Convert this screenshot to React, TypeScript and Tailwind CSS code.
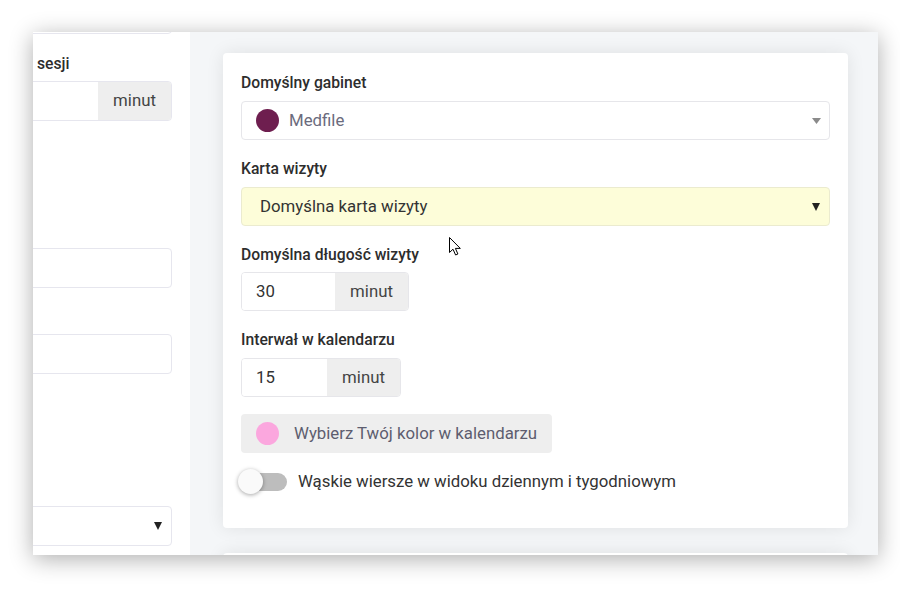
import React from "react";

const Caret = ({ className }: { className?: string }) => (
  <svg width="9" height="6" viewBox="0 0 9 6" className={className}>
    <path d="M0 0 L9 0 L4.5 6 Z" fill="currentColor" />
  </svg>
);

const SolidCaret = ({ className }: { className?: string }) => (
  <svg width="8" height="8" viewBox="0 0 8 8" className={className}>
    <path d="M0 0 L8 0 L4 8 Z" fill="currentColor" />
  </svg>
);

const MinutGroup = ({ value, inputWidth }: { value: string; inputWidth: string }) => (
  <div className="flex h-[39px] w-max rounded-[4px] border border-[#e6e6ea] overflow-hidden">
    <div className={`${inputWidth} flex items-center pl-[14px] text-[16.8px] text-[#333] bg-white`}>
      {value}
    </div>
    <div className="w-[73px] flex items-center justify-center bg-[#eeeeee] text-[16.8px] text-[#444]">
      minut
    </div>
  </div>
);

export default function App() {
  return (
    <div className="relative w-[900px] h-[600px] bg-white pt-[32px] pl-[33px] font-['Roboto',sans-serif]">
      {/* Captured window */}
      <div className="flex w-[845px] h-[523px] overflow-hidden shadow-[0_4px_22px_rgba(0,0,0,0.32)]">
        {/* Left settings column, cut off */}
        <div className="w-[157px] shrink-0 bg-white overflow-hidden pr-[18px] flex flex-col">
          <div className="mt-[-38px] -ml-[30px] h-10 rounded-[4px] border border-[#e6e6ee] bg-white" />
          <div className="mt-[19px] pl-[4px] text-[15.7px] leading-[22px] font-medium text-[#2d2d2d]">
            sesji
          </div>
          <div className="mt-[6px] -ml-[30px] flex h-10 rounded-[4px] border border-[#e6e6ee] overflow-hidden">
            <div className="flex-1 bg-white" />
            <div className="w-[73px] flex items-center justify-center bg-[#eeeeee] text-[16.8px] text-[#444]">
              minut
            </div>
          </div>
          <div className="mt-[127px] -ml-[30px] h-10 rounded-[4px] border border-[#e6e6ee] bg-white" />
          <div className="mt-[46px] -ml-[30px] h-10 rounded-[4px] border border-[#e6e6ee] bg-white" />
          <div className="mt-[132px] -ml-[30px] h-10 rounded-[4px] border border-[#e6e6ee] bg-white flex items-center justify-end pr-[9px]">
            <SolidCaret className="text-[#222]" />
          </div>
        </div>

        {/* Right area */}
        <div className="flex-1 bg-[#f4f6f8] pl-[33px] pr-[30px] pt-[21px]">
          <div className="bg-white rounded-[4px] shadow-[0_0_18px_rgba(0,0,0,0.09)] px-[18px] pt-[20px] pb-[33px]">
            <div className="text-[15.7px] leading-[20px] font-medium text-[#2d2d2d]">Domyślny gabinet</div>
            <div className="mt-2 h-[39px] rounded-[4px] border border-[#e6e6ea] flex items-center pl-[14px] pr-[8px]">
              <span className="w-[23px] h-[23px] rounded-full bg-[#6e1e4f]" />
              <span className="ml-[10px] text-[16.8px] text-[#6b6b7d]">Medfile</span>
              <Caret className="ml-auto text-[#8a8a8a]" />
            </div>

            <div className="mt-[19px] text-[15.7px] leading-[20px] font-medium text-[#2d2d2d]">Karta wizyty</div>
            <div className="mt-2 h-[39px] rounded-[4px] border border-[#ebebcf] bg-[#fdfdd9] flex items-center pl-[18px] pr-[9px]">
              <span className="text-[16.8px] text-[#333]">Domyślna karta wizyty</span>
              <SolidCaret className="ml-auto text-[#222]" />
            </div>

            <div className="mt-[19px] text-[15.7px] leading-[20px] font-medium text-[#2d2d2d]">
              Domyślna długość wizyty
            </div>
            <div className="mt-[7px]">
              <MinutGroup value="30" inputWidth="w-[93px]" />
            </div>

            <div className="mt-[19px] text-[15.7px] leading-[20px] font-medium text-[#2d2d2d]">
              Interwał w kalendarzu
            </div>
            <div className="mt-2">
              <MinutGroup value="15" inputWidth="w-[85px]" />
            </div>

            <button className="mt-[17px] h-[39px] w-[311px] rounded-[4px] bg-[#eeeeee] flex items-center pl-[15px]">
              <span className="w-[23px] h-[23px] rounded-full bg-[#fba7de]" />
              <span className="ml-[15px] text-[16.8px] text-[#5d5d6f]">Wybierz Twój kolor w kalendarzu</span>
            </button>

            <div className="mt-[16px] flex items-center h-[26px] -ml-[3px]">
              <div className="relative w-[49px] h-[26px] shrink-0">
                <div className="absolute right-0 top-[4px] w-[44px] h-[18px] rounded-full bg-[#bdbdbd]" />
                <div className="absolute left-0 top-0 w-[25px] h-[25px] rounded-full bg-[#fafafa] shadow-[0_1px_4px_rgba(0,0,0,0.35)]" />
              </div>
              <span className="ml-[11px] text-[16.8px] text-[#333]">
                Wąskie wiersze w widoku dziennym i tygodniowym
              </span>
            </div>
          </div>

          <div className="mt-[25px] h-[40px] bg-white rounded-[4px] shadow-[0_0_18px_rgba(0,0,0,0.09)]" />
        </div>
      </div>

      {/* Mouse pointer */}
      <svg
        className="absolute left-[449px] top-[237px]"
        width="13"
        height="19"
        viewBox="0 0 13 19"
      >
        <path
          d="M0.5 0.5 L0.5 15.5 L4 12.2 L6.6 18 L8.9 17 L6.4 11.4 L11.3 11.4 Z"
          fill="white"
          stroke="black"
          strokeWidth="1"
          strokeLinejoin="miter"
        />
      </svg>
    </div>
  );
}
